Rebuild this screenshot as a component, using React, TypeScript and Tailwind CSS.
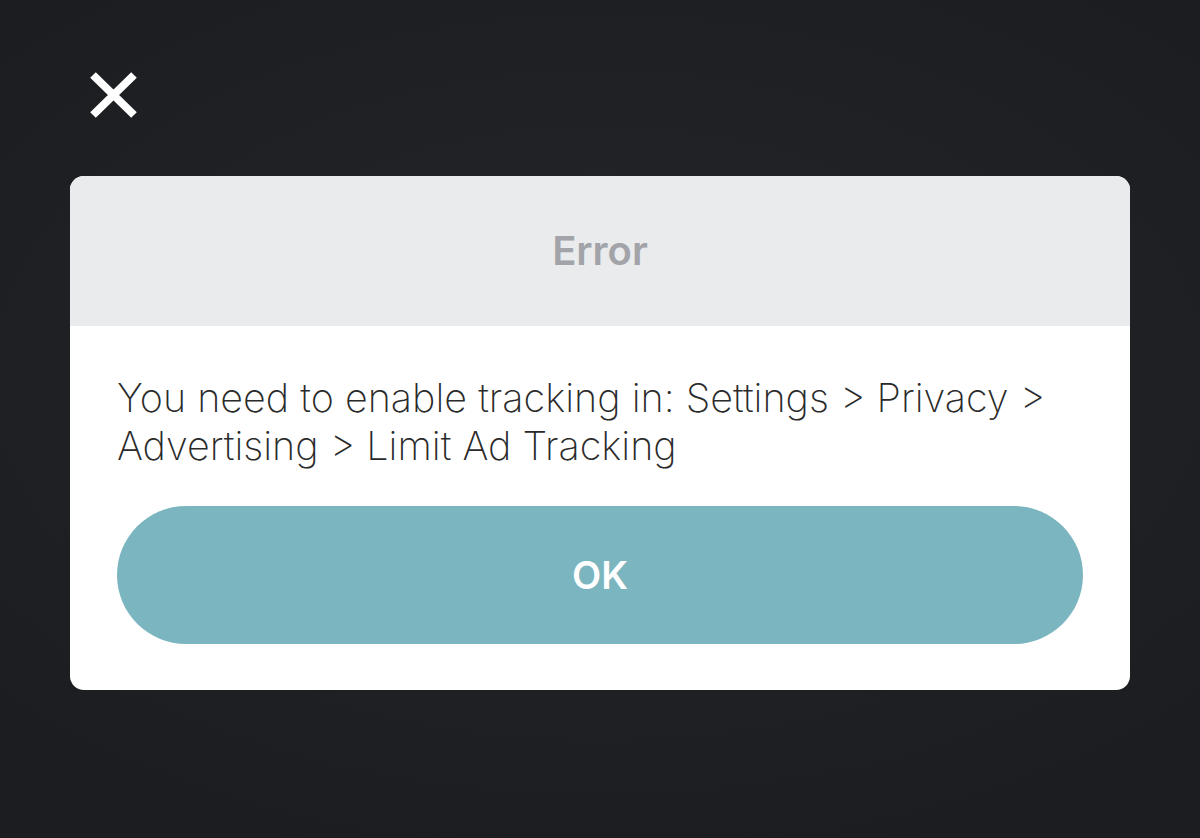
export default function App() {
  return (
    <div className="relative h-[838px] w-[1200px] overflow-hidden bg-[radial-gradient(ellipse_70%_60%_at_50%_45%,#24272b,#1b1d20)] font-['Inter','Noto_Sans',sans-serif]">
      {/* Close */}
      <button className="absolute left-[90px] top-[72px] h-[46px] w-[47px]">
        <svg viewBox="0 0 47 46" className="h-full w-full">
          <path d="M3 3 L44 43 M44 3 L3 43" stroke="#fff" strokeWidth="8" strokeLinecap="butt" fill="none" />
        </svg>
      </button>

      <div className="flex justify-center pt-[176px]">
        <div className="w-[1060px] overflow-hidden rounded-[14px] bg-white">
          <div className="flex h-[150px] items-center justify-center bg-[#eaebed]">
            <span className="text-[40px] font-semibold text-[#a2a4a9]">Error</span>
          </div>
          <div className="px-[47px] pt-[48px] pb-[46px]">
            <p className="text-[39.5px] font-extralight leading-[48px] text-[#2a2a2a]">
              You need to enable tracking in: Settings &gt; Privacy &gt; Advertising &gt; Limit Ad Tracking
            </p>
            <button className="mt-[36px] flex h-[138px] w-full items-center justify-center rounded-full bg-[#7bb5bf]">
              <span className="text-[38px] font-semibold text-white">OK</span>
            </button>
          </div>
        </div>
      </div>
    </div>
  )
}
